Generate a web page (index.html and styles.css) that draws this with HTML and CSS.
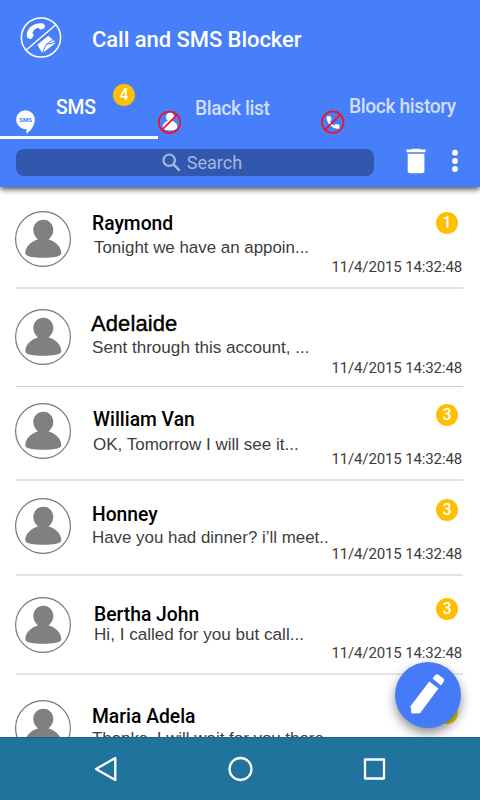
FILE: index.html
```html
<!DOCTYPE html>
<html lang="en">
<head>
    <meta charset="UTF-8">
    <meta name="viewport" content="width=device-width, initial-scale=1.0">
    <title>Call and SMS Blocker</title>
    <link rel="stylesheet" href="styles.css">
</head>
<body>
    <!-- Shared shapes -->
    <svg class="defs" width="0" height="0">
        <symbol id="person" viewBox="0 0 56 56">
            <circle cx="28" cy="28" r="27.4" fill="#fff" stroke="#777" stroke-width="1.2"/>
            <path fill="#808080" d="M28.300 8.800c5.800 0 10 4.400 10 10.200 0 3.800-1.900 7.300-4.800 9.500 7.200 1.800 12.800 7.400 12.800 13.700 0 3.400-8.300 4.600-18 4.600s-18-1.200-18-4.600c0-6.300 5.600-11.900 12.800-13.700-2.900-2.200-4.800-5.700-4.800-9.500 0-5.800 4.200-10.200 10-10.200z"/>
        </symbol>
    </svg>

    <div class="header">
        <div class="title-bar">
            <svg class="logo" width="42" height="42" viewBox="0 0 42 42">
                <circle cx="21" cy="20.500" r="19.600" fill="none" stroke="#fff" stroke-width="1.500"/>
                <path d="M6 33.300L35.500 8" stroke="#fff" stroke-width="1.500"/>
                <path fill="#fff" d="M6.700 18.500C6.600 11.500 13.500 5.300 22 6.300c2.600.5 3.600 2.700 2.400 4.800l-3.200 1.300c-1.200.2-2-.4-2.200-1.700-3.300.2-6 2.500-6.600 5.500 1.200.6 1.500 1.500 1 2.500l-1.500 2.900c-2 1-5 .300-5.200-3.100z"/>
                <path fill="#fff" d="M28.300 18.700l7.700 7-13.700 10.600-5-8.600z"/>
                <path d="M36.500 25.200L26.300 27.400 22 36.800M26.300 27.400L33 22.500" fill="none" stroke="#477ef9" stroke-width="1"/>
            </svg>
            <span class="title">Call and SMS Blocker</span>
        </div>

        <div class="tabs">
            <div class="tab tab-sms active">
                <svg class="tab-icon" width="20" height="25" viewBox="0 0 20 25">
                    <path fill="#fff" d="M9.500.3a9.300 9.300 0 0 1 9.300 9.300c0 6.200-4 11-8.300 14.200v-4.500C4.500 19.300.2 14.800.2 9.600A9.300 9.300 0 0 1 9.500.3z"/>
                    <text x="9.600" y="12" text-anchor="middle" class="bubble-text">SMS</text>
                </svg>
                <span class="tab-label">SMS</span>
                <span class="badge">4</span>
            </div>
            <div class="tab tab-black">
                <svg class="tab-icon" width="24" height="24" viewBox="0 0 24 24">
                    <path fill="#fff" d="M12 2.800c2.500 0 4 1.900 4 4.200 0 1.700-.8 3-2 3.900 3.300.8 5.400 3 5.400 5.600 0 2.800-3 3.900-7.400 3.900s-7.300-1.100-7.300-3.900c0-2.600 2-4.800 5.300-5.600-1.200-.9-2-2.200-2-3.900 0-2.300 1.500-4.200 4-4.200z"/>
                    <circle cx="11.500" cy="12.300" r="10.800" fill="none" stroke="#f0121d" stroke-width="1.600"/>
                    <path d="M4 19.800L19.100 4.700" stroke="#f0121d" stroke-width="1.700"/>
                </svg>
                <span class="tab-label">Black list</span>
            </div>
            <div class="tab tab-history">
                <svg class="tab-icon" width="24" height="24" viewBox="0 0 24 24">
                    <path fill="#fff" d="M6.300 6.200h2.800c.5 0 .8.300.9.800.1 1 .3 1.900.6 2.700l-1.500 1.900c1.100 2 2.200 3 4 3.900l1.600-1.600c.9.200 1.900.4 2.900.5.500.1.800.4.800.900v2.600c0 .6-.3.900-.9.900C11 18.800 5.800 13.500 5.500 7.200c0-.6.300-1 .8-1z"/>
                    <circle cx="11.700" cy="12.200" r="10.800" fill="none" stroke="#f0121d" stroke-width="1.600"/>
                    <path d="M4.200 19.700L19.300 4.600" stroke="#f0121d" stroke-width="1.700"/>
                </svg>
                <span class="tab-label">Block history</span>
            </div>
        </div>

        <div class="toolbar">
            <div class="search">
                <svg width="19" height="19" viewBox="0 0 19 19" fill="none" stroke="#a5b7df">
                    <circle cx="7.200" cy="7.200" r="5.700" stroke-width="2.200"/>
                    <path d="M11.200 11.200l6.500 6.500" stroke-width="2.600"/>
                </svg>
                <span>Search</span>
            </div>
            <svg class="trash" width="20" height="26" viewBox="0 0 20 26">
                <path fill="#fff" d="M6 .7h8l.8.900H19.500v2.700H.500V1.600h4.700zM1.700 5.700h16.700v17.300c0 1.400-.9 2.200-2.200 2.200H3.900c-1.300 0-2.200-.8-2.200-2.200z"/>
            </svg>
            <svg class="more" width="8" height="24" viewBox="0 0 8 24" fill="#fff">
                <circle cx="4" cy="3.700" r="2.900"/>
                <circle cx="4" cy="12" r="2.900"/>
                <circle cx="4" cy="20" r="2.900"/>
            </svg>
        </div>
    </div>

    <div class="list">
        <div class="row raymond">
            <svg class="avatar"><use href="#person"/></svg>
            <div class="text">
                <div class="name">Raymond</div>
                <div class="message">Tonight we have an appoin...</div>
            </div>
            <div class="side">
                <span class="badge">1</span>
                <span class="time">11/4/2015 14:32:48</span>
            </div>
        </div>
        <div class="row adelaide">
            <svg class="avatar"><use href="#person"/></svg>
            <div class="text">
                <div class="name">Adelaide</div>
                <div class="message">Sent through this account, ...</div>
            </div>
            <div class="side">
                <span class="time">11/4/2015 14:32:48</span>
            </div>
        </div>
        <div class="row william">
            <svg class="avatar"><use href="#person"/></svg>
            <div class="text">
                <div class="name">William Van</div>
                <div class="message">OK, Tomorrow I will see it...</div>
            </div>
            <div class="side">
                <span class="badge">3</span>
                <span class="time">11/4/2015 14:32:48</span>
            </div>
        </div>
        <div class="row honney">
            <svg class="avatar"><use href="#person"/></svg>
            <div class="text">
                <div class="name">Honney</div>
                <div class="message">Have you had dinner? i’ll meet..</div>
            </div>
            <div class="side">
                <span class="badge">3</span>
                <span class="time">11/4/2015 14:32:48</span>
            </div>
        </div>
        <div class="row bertha">
            <svg class="avatar"><use href="#person"/></svg>
            <div class="text">
                <div class="name">Bertha John</div>
                <div class="message">Hi, I called for you but call...</div>
            </div>
            <div class="side">
                <span class="badge">3</span>
                <span class="time">11/4/2015 14:32:48</span>
            </div>
        </div>
        <div class="row maria">
            <svg class="avatar"><use href="#person"/></svg>
            <div class="text">
                <div class="name">Maria Adela</div>
                <div class="message">Thanks, I will wait for you there</div>
            </div>
            <div class="side">
                <span class="badge"></span>
            </div>
        </div>
    </div>

    <div class="compose">
        <svg width="66" height="66" viewBox="0 0 66 66" fill="#fff">
            <path d="M34.200 19.500l9.200 7L25 51.200l-8.400.3-1.100-7.300z"/>
            <path d="M37.600 16.500l2.300-3.100c.9-1.200 2.200-1.500 3.500-.6l4.700 3.500c1.200.9 1.300 2.300.5 3.500l-2.600 3.700z"/>
        </svg>
    </div>

    <div class="nav">
        <svg width="24" height="28" viewBox="0 0 24 28"><path d="M22.300 3v22L3 14z"/></svg>
        <svg width="26" height="28" viewBox="0 0 26 28"><circle cx="13.500" cy="14" r="11"/></svg>
        <svg width="24" height="28" viewBox="0 0 24 28"><path d="M2 4.500h19v19H2z"/></svg>
    </div>
</body>
</html>
```

FILE: styles.css
```css
* {
    box-sizing: border-box;
}
body {
    margin: 0;
    width: 480px;
    height: 800px;
    overflow: hidden;
    position: relative;
    display: flex;
    flex-direction: column;
    font-family: Roboto, sans-serif;
    background: #fff;
}
svg {
    display: block;
    flex: none;
}
.defs {
    position: absolute;
}

/* Header */
.header {
    flex: none;
    height: 187px;
    background: #477ef9;
    box-shadow: 0 2px 6px rgba(0, 0, 0, 0.75);
    z-index: 1;
}
.title-bar {
    display: flex;
    height: 80px;
    padding: 17px 0 0 20px;
}
.title {
    margin: 10px 0 0 30px;
    font-size: 22px;
    line-height: 26px;
    font-weight: 500;
    letter-spacing: -0.05px;
    color: #fff;
    white-space: nowrap;
}
.tabs {
    display: flex;
    height: 59px;
}
.tab {
    display: flex;
    align-items: flex-start;
    color: rgba(255, 255, 255, 0.75);
    font-size: 19.300px;
    line-height: 24px;
    font-weight: 500;
    letter-spacing: -0.4px;
    white-space: nowrap;
}
.tab-icon {
    margin-top: 30px;
}
.tab-sms {
    width: 158px;
    padding-left: 16px;
    color: #fff;
}
.tab-sms.active {
    border-bottom: 3px solid #fff;
}
.tab-sms .tab-label {
    margin: 16px 0 0 20px;
    width: 57px;
    letter-spacing: -0.2px;
}
.tab-sms .badge {
    margin-top: 4px;
}
.bubble-text {
    font: bold 6px Roboto, sans-serif;
    letter-spacing: 0;
    fill: #477ef9;
}
.tab-black {
    width: 163px;
}
.tab-black .tab-label {
    margin: 17px 0 0 13px;
}
.tab-history .tab-label {
    margin: 15px 0 0 4px;
}
.badge {
    flex: none;
    width: 22px;
    height: 22px;
    border-radius: 50%;
    background: #ffbf00;
    color: #fff;
    font-size: 16px;
    line-height: 22px;
    font-weight: 500;
    letter-spacing: 0;
    text-align: center;
}
.toolbar {
    display: flex;
    align-items: flex-start;
    padding: 10px 0 0 16px;
}
.search {
    width: 358px;
    height: 27px;
    border-radius: 8px;
    background: #3158ae;
    display: flex;
    align-items: center;
    justify-content: center;
    gap: 6px;
    padding-left: 14px;
    color: #a5b7df;
    font-size: 18px;
    line-height: 27px;
}
.trash {
    margin: -1px 0 0 32px;
}
.more {
    margin: 0 0 0 25px;
}

/* Messages */
.list {
    flex: none;
    height: 550px;
    overflow: hidden;
}
.row {
    display: flex;
    margin: 0 17px 0 16px;
    border-bottom: 2px solid #e4e4e4;
}
.avatar {
    width: 56px;
    height: 56px;
    margin: 24px 20px 0 -1px;
}
.text {
    width: 241px;
    white-space: nowrap;
}
.name {
    font-size: 19.300px;
    line-height: 20px;
    font-weight: 500;
    color: #000;
}
.message {
    font-family: "Liberation Sans", Arial, sans-serif;
    font-size: 16.900px;
    line-height: 20px;
    color: #3d3d3d;
}
.side {
    flex: 1;
    display: flex;
    flex-direction: column;
    align-items: flex-end;
}
.side .badge {
    margin-right: 5px;
}
.time {
    margin: auto 1px 0 0;
    font-size: 15px;
    line-height: 18px;
    letter-spacing: -0.13px;
    color: #3d3d3d;
    white-space: nowrap;
}

.raymond {
    height: 102px;
}
.raymond .text {
    padding: 27px 0 0 1px;
}
.raymond .message {
    margin: 4px 0 0 2px;
}
.raymond .side {
    padding: 25px 0 11px;
}

.adelaide {
    height: 98px;
    border-bottom: 1px solid #ccc;
}
.adelaide .avatar {
    margin-top: 20px;
}
.adelaide .text {
    padding-top: 25px;
}
.adelaide .name {
    font-family: "Liberation Sans", Arial, sans-serif;
    font-size: 22px;
    font-weight: 400;
    letter-spacing: 0.1px;
    -webkit-text-stroke: 0.4px #000;
}
.adelaide .message {
    margin: 4px 0 0 1px;
    font-size: 17.100px;
}
.adelaide .side {
    padding-bottom: 9px;
}

.william {
    height: 94px;
}
.william .avatar {
    margin-top: 16px;
}
.william .text {
    padding: 23px 0 0 2px;
}
.william .message {
    margin-top: 5px;
    font-size: 17px;
}
.william .side {
    padding: 17px 0 11px;
}

.honney {
    height: 95px;
}
.honney .avatar {
    margin-top: 17px;
}
.honney .text {
    padding: 24px 0 0 1px;
}
.honney .message {
    margin-top: 3px;
}
.honney .side {
    padding: 18px 0 11px;
}

.bertha {
    height: 99px;
}
.bertha .avatar {
    margin-top: 21px;
}
.bertha .text {
    padding: 29px 0 0 3px;
}
.bertha .message {
    font-size: 17.100px;
}
.bertha .side {
    padding: 22px 0 11px;
}

.maria {
    height: 100px;
}
.maria .avatar {
    margin-top: 25px;
}
.maria .text {
    padding: 32px 0 0 1px;
}
.maria .message {
    margin-top: 2px;
}
.maria .side {
    padding-top: 27px;
}
.maria .badge {
    background: #e8d200;
}

/* Floating button over the list */
.compose {
    position: absolute;
    right: 19px;
    bottom: 72px;
    width: 66px;
    height: 66px;
    border-radius: 50%;
    background: #457bf7;
    box-shadow: 0 5px 11px rgba(0, 0, 0, 0.45);
}

.nav {
    flex: none;
    height: 63px;
    background: #1f739c;
    border-top: 1px solid #17638a;
    display: flex;
    justify-content: center;
    align-items: center;
    gap: 110px;
    z-index: 2;
}
.nav svg {
    fill: none;
    stroke: #fff;
    stroke-width: 2.300;
    stroke-linejoin: round;
}
```
